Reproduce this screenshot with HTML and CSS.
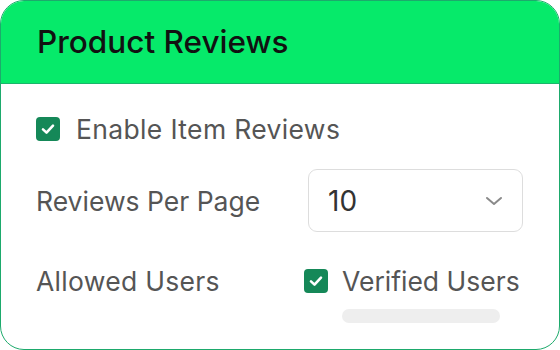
FILE: index.html
```html
<html>
<head>
    <title>Product Reviews</title>
    <meta name="viewport" content="width=device-width, initial-scale=1.0">
    <link rel="stylesheet" href="styles.css">
</head>
<body>
<div class="card">
    <div class="card-header">
        <h1>Product Reviews</h1>
    </div>
    <div class="card-body">
        <label class="check-row first">
            <span class="checkbox">
                <svg width="16" height="16" viewBox="0 0 16 16"><path d="M3 8.4 L6.5 11.6 L13 4.6" fill="none" stroke="#fff" stroke-width="2.6" stroke-linecap="round" stroke-linejoin="round"/></svg>
            </span>
            <span class="check-text">Enable Item Reviews</span>
        </label>

        <div class="setting-row per-page">
            <span class="setting-label">Reviews Per Page</span>
            <div class="select">
                <span class="select-value">10</span>
                <svg class="chevron" width="18" height="10" viewBox="0 0 18 10"><path d="M2 2 L9 8 L16 2" fill="none" stroke="#8a8a8a" stroke-width="2" stroke-linecap="round" stroke-linejoin="round"/></svg>
            </div>
        </div>

        <div class="setting-row users">
            <span class="setting-label">Allowed Users</span>
            <div class="user-options">
                <label class="check-row">
                    <span class="checkbox">
                        <svg width="16" height="16" viewBox="0 0 16 16"><path d="M3 8.4 L6.5 11.6 L13 4.6" fill="none" stroke="#fff" stroke-width="2.6" stroke-linecap="round" stroke-linejoin="round"/></svg>
                    </span>
                    <span class="check-text">Verified Users</span>
                </label>
                <div class="placeholder-bar"></div>
            </div>
        </div>
    </div>
</div>
</body>
</html>
```

FILE: styles.css
```css
body {
    margin: 0;
    font-family: Inter, "Noto Sans", sans-serif;
    background: #ffffff;
}

.card {
    width: 560px;
    height: 350px;
    box-sizing: border-box;
    border: 1px solid #1daa6c;
    border-radius: 24px;
    overflow: hidden;
    background: #ffffff;
}

.card-header {
    height: 82px;
    background: #06ea6a;
    border-bottom: 1px solid #1bb56b;
    display: flex;
    align-items: center;
    padding-left: 36px;
}

h1 {
    margin: 0;
    font-size: 31.5px;
    font-weight: 500;
    line-height: 36px;
    color: #111111;
}

.card-body {
    padding: 30px 36px 0 35px;
}

.check-row {
    display: flex;
    align-items: center;
    gap: 16px;
}

.checkbox {
    width: 24px;
    height: 24px;
    border-radius: 4px;
    background: #158858;
    display: flex;
    align-items: center;
    justify-content: center;
    flex-shrink: 0;
}

.check-text,
.setting-label {
    font-size: 26.5px;
    line-height: 30px;
    color: #555555;
}

.first .check-text {
    letter-spacing: 0.35px;
}

.setting-row {
    display: grid;
    grid-template-columns: 268px 1fr;
    align-items: center;
}

.per-page {
    margin-top: 25px;
}

.select {
    margin-left: 4px;
    height: 63px;
    box-sizing: border-box;
    border: 1px solid #dddddd;
    border-radius: 9px;
    display: flex;
    align-items: center;
    justify-content: space-between;
    padding: 0 19px 0 19px;
}

.select-value {
    font-size: 28px;
    color: #333333;
}

.users {
    margin-top: 34px;
    align-items: start;
}

.users .setting-label {
    letter-spacing: 0.3px;
}

.user-options .check-row {
    gap: 14px;
}

.placeholder-bar {
    width: 158px;
    height: 14px;
    margin: 13px 0 0 38px;
    border-radius: 7px;
    background: #eeeeee;
}
```
